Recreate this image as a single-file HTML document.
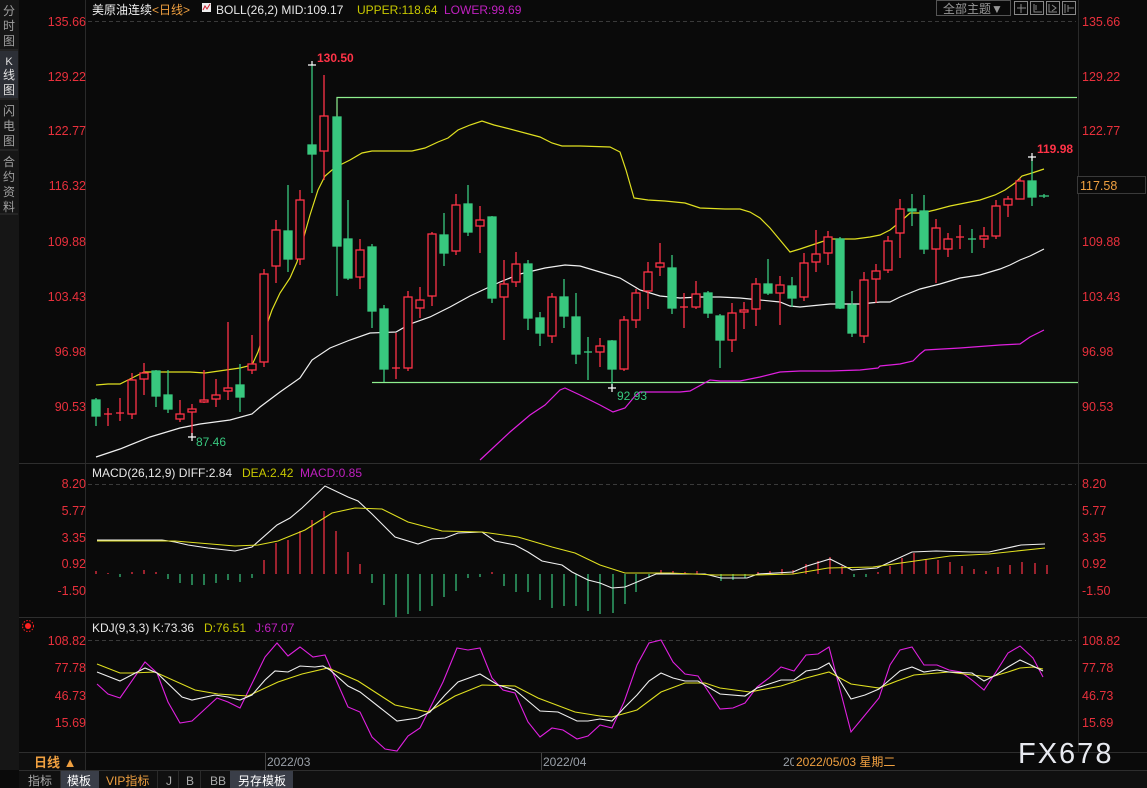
<!DOCTYPE html>
<html><head><meta charset="utf-8"><style>
html,body{margin:0;padding:0;background:#0a0a0a;width:1147px;height:788px;overflow:hidden}
svg{display:block}
text{font-family:"Liberation Sans","Noto Sans CJK SC",sans-serif}
</style></head><body>
<svg width="1147" height="788" xmlns="http://www.w3.org/2000/svg">
<rect width="1147" height="788" fill="#0a0a0a"/>
<!-- left sidebar -->
<rect x="0" y="0" width="19" height="770" fill="#161616"/>
<rect x="0" y="51" width="18" height="47" fill="#2c2f36"/>
<g fill="#a0a0a0" font-size="12" text-anchor="middle">
<text x="9" y="15">分</text><text x="9" y="30">时</text><text x="9" y="45">图</text>
<text x="9" y="65" fill="#e0e0e0" font-size="11">K</text><text x="9" y="79" fill="#e0e0e0">线</text><text x="9" y="94" fill="#e0e0e0">图</text>
<text x="9" y="115">闪</text><text x="9" y="130">电</text><text x="9" y="145">图</text>
<text x="9" y="166">合</text><text x="9" y="181">约</text><text x="9" y="196">资</text><text x="9" y="211">料</text>
</g>
<line x1="0" y1="50" x2="18" y2="50" stroke="#333"/><line x1="0" y1="99" x2="18" y2="99" stroke="#333"/><line x1="0" y1="150" x2="18" y2="150" stroke="#333"/><line x1="0" y1="214" x2="18" y2="214" stroke="#333"/>
<!-- frame lines -->
<line x1="85.5" y1="0" x2="85.5" y2="770" stroke="#2a2a2a"/>
<line x1="1078.5" y1="0" x2="1078.5" y2="752" stroke="#2a2a2a"/>
<line x1="19" y1="463.5" x2="1147" y2="463.5" stroke="#2e2e2e"/>
<line x1="19" y1="617.5" x2="1147" y2="617.5" stroke="#2e2e2e"/>
<line x1="19" y1="752.5" x2="1147" y2="752.5" stroke="#2e2e2e"/>
<line x1="19" y1="770.5" x2="1147" y2="770.5" stroke="#2e2e2e"/>
<g stroke="#3a3a3a" stroke-dasharray="4,3"><line x1="88" y1="21.5" x2="1076" y2="21.5"/><line x1="88" y1="484.5" x2="1076" y2="484.5"/><line x1="88" y1="640.5" x2="1076" y2="640.5"/></g>
<!-- axis labels -->
<g fill="#e8303c" font-size="12.5">
<g text-anchor="end">
<text x="86" y="26">135.66</text><text x="86" y="81">129.22</text><text x="86" y="135">122.77</text><text x="86" y="190">116.32</text><text x="86" y="246">109.88</text><text x="86" y="301">103.43</text><text x="86" y="356">96.98</text><text x="86" y="411">90.53</text>
<text x="86" y="488">8.20</text><text x="86" y="515">5.77</text><text x="86" y="542">3.35</text><text x="86" y="568">0.92</text><text x="86" y="595">-1.50</text>
<text x="86" y="645">108.82</text><text x="86" y="672">77.78</text><text x="86" y="700">46.73</text><text x="86" y="727">15.69</text>
</g>
<text x="1082" y="26">135.66</text><text x="1082" y="81">129.22</text><text x="1082" y="135">122.77</text><text x="1082" y="246">109.88</text><text x="1082" y="301">103.43</text><text x="1082" y="356">96.98</text><text x="1082" y="411">90.53</text>
<text x="1082" y="488">8.20</text><text x="1082" y="515">5.77</text><text x="1082" y="542">3.35</text><text x="1082" y="568">0.92</text><text x="1082" y="595">-1.50</text>
<text x="1082" y="645">108.82</text><text x="1082" y="672">77.78</text><text x="1082" y="700">46.73</text><text x="1082" y="727">15.69</text>
</g>
<rect x="1077.5" y="176.5" width="68" height="17" fill="#0a0a0a" stroke="#3a3a3a"/>
<text x="1080" y="190" fill="#f0a040" font-size="12.5">117.58</text>
<!-- header -->
<text x="92" y="14" font-size="12" fill="#f0f0f0">美原油连续<tspan fill="#f0a040">&lt;日线&gt;</tspan></text>
<rect x="202" y="3" width="9" height="9" fill="#eee"/><polyline points="203,10 205,6 207,9 210,4" fill="none" stroke="#d02030"/>
<text x="216" y="14" font-size="12" fill="#e8e8e8">BOLL(26,2) MID:109.17</text>
<text x="357" y="14" font-size="12" fill="#c8c800">UPPER:118.64</text>
<text x="444" y="14" font-size="12" fill="#c020c0">LOWER:99.69</text>
<rect x="936.5" y="0.5" width="74" height="15" fill="none" stroke="#555"/>
<text x="943" y="13" font-size="12" fill="#999">全部主题▼</text>
<g stroke="#888" fill="none"><rect x="1014.5" y="1.5" width="13" height="13"/><rect x="1030.5" y="1.5" width="13" height="13"/><rect x="1046.5" y="1.5" width="13" height="13"/><rect x="1062.5" y="1.5" width="13" height="13"/>
<path d="M1021 4v9M1017 8h9M1034 4v8h8M1036 5v5M1049 4v8h8M1052 5l4 3-4 3M1065 4v9M1068 5v7M1068 8h6"/></g>
<text x="92" y="477" font-size="12" fill="#e8e8e8">MACD(26,12,9) DIFF:2.84</text>
<text x="242" y="477" font-size="12" fill="#c8c800">DEA:2.42</text>
<text x="300" y="477" font-size="12" fill="#c020c0">MACD:0.85</text>
<circle cx="28" cy="626" r="3" fill="#ff2020"/><circle cx="28" cy="626" r="5.5" fill="none" stroke="#ff2020" stroke-dasharray="1.5,1.5"/>
<text x="92" y="632" font-size="12" fill="#e8e8e8">KDJ(9,3,3) K:73.36</text>
<text x="204" y="632" font-size="12" fill="#c8c800">D:76.51</text>
<text x="255" y="632" font-size="12" fill="#c020c0">J:67.07</text>
<!-- horizontal green lines -->
<g stroke="#8ff08f" fill="none" stroke-width="1.2"><polyline points="337,117 337,97.5 1077,97.5"/><line x1="372" y1="382.5" x2="1078" y2="382.5"/></g>
<!-- BOLL -->
<polyline fill="none" stroke="#e0e020" stroke-width="1.2" points="96,385 108,384 120,384 132,378 144,372 190,372 205,373 240,368 252,365 258,352 265,330 272,310 280,293 290,278 297,262 303,240 310,215 318,190 325,176 332,170 340,165 350,160 362,153 372,151 412,151 425,148 438,142 448,138 458,130 470,125 482,121 494,125 506,128 540,137 552,143 562,146 580,146 610,147 620,152 626,170 634,198 648,200 665,201 685,203 700,208 725,209 740,209 750,212 760,218 770,228 780,240 790,252 800,249 815,244 830,239 855,239 870,237 880,235 890,230 900,222 910,213 922,213 935,210 950,206 965,203 980,200 995,195 1005,190 1015,183 1022,176 1032,173 1044,169"/>
<polyline fill="none" stroke="#f0f0f0" stroke-width="1.2" points="96,457 120,449 150,437 180,428 200,424 230,420 252,414 260,407 280,392 300,378 312,360 330,348 350,340 370,333 396,332 410,324 430,317 450,307 470,296 485,289 500,282 520,274 545,268 565,265 580,266 600,272 620,278 640,290 660,296 680,298 700,297 720,297 740,298 760,300 780,302 790,306 800,307 830,304 860,304 880,302 890,302 900,297 920,289 940,284 960,278 980,275 1000,269 1010,265 1020,260 1030,256 1044,249"/>
<polyline fill="none" stroke="#e020e0" stroke-width="1.2" points="480,460 510,432 530,415 545,405 560,390 565,388 580,395 600,405 613,412 625,408 635,396 640,392 680,392 690,391 710,380 720,381 740,381 760,377 780,372 800,371 830,371 860,370 878,368 880,366 900,364 913,361 920,354 925,350 960,348 1000,345 1020,344 1030,337 1044,330"/>
<!-- candles -->
<g id="c" stroke-width="1.3">
<g stroke="#38c87f" fill="#38c87f">
<line x1="96" y1="398" x2="96" y2="426"/><rect x="92" y="400" width="8" height="16"/>
<line x1="156" y1="370" x2="156" y2="407"/><rect x="152" y="371" width="8" height="25"/>
<line x1="168" y1="370" x2="168" y2="413"/><rect x="164" y="395" width="8" height="14"/>
<line x1="240" y1="364" x2="240" y2="412"/><rect x="236" y="385" width="8" height="12"/>
<line x1="288" y1="185" x2="288" y2="272"/><rect x="284" y="231" width="8" height="28"/>
<line x1="312" y1="65" x2="312" y2="193"/><rect x="308" y="145" width="8" height="9"/>
<line x1="337" y1="117" x2="337" y2="296"/><rect x="333" y="117" width="8" height="129"/>
<line x1="348" y1="200" x2="348" y2="280"/><rect x="344" y="239" width="8" height="39"/>
<line x1="372" y1="244" x2="372" y2="328"/><rect x="368" y="247" width="8" height="64"/>
<line x1="384" y1="305" x2="384" y2="382"/><rect x="380" y="309" width="8" height="60"/>
<line x1="444" y1="213" x2="444" y2="266"/><rect x="440" y="235" width="8" height="18"/>
<line x1="468" y1="185" x2="468" y2="236"/><rect x="464" y="204" width="8" height="28"/>
<line x1="492" y1="216" x2="492" y2="303"/><rect x="488" y="217" width="8" height="81"/>
<line x1="528" y1="260" x2="528" y2="330"/><rect x="524" y="264" width="8" height="54"/>
<line x1="540" y1="312" x2="540" y2="346"/><rect x="536" y="318" width="8" height="15"/>
<line x1="564" y1="279" x2="564" y2="328"/><rect x="560" y="297" width="8" height="19"/>
<line x1="576" y1="293" x2="576" y2="364"/><rect x="572" y="317" width="8" height="37"/>
<line x1="588" y1="337" x2="588" y2="380"/><line x1="584" y1="352" x2="592" y2="352"/>
<line x1="612" y1="340" x2="612" y2="388"/><rect x="608" y="341" width="8" height="28"/>
<line x1="672" y1="255" x2="672" y2="314"/><rect x="668" y="268" width="8" height="40"/>
<line x1="708" y1="291" x2="708" y2="318"/><rect x="704" y="293" width="8" height="20"/>
<line x1="720" y1="314" x2="720" y2="368"/><rect x="716" y="316" width="8" height="24"/>
<line x1="768" y1="259" x2="768" y2="295"/><rect x="764" y="284" width="8" height="9"/>
<line x1="792" y1="277" x2="792" y2="307"/><rect x="788" y="286" width="8" height="12"/>
<line x1="840" y1="237" x2="840" y2="309"/><rect x="836" y="239" width="8" height="69"/>
<line x1="852" y1="291" x2="852" y2="337"/><rect x="848" y="305" width="8" height="28"/>
<line x1="912" y1="194" x2="912" y2="226"/><rect x="908" y="209" width="8" height="2"/>
<line x1="924" y1="195" x2="924" y2="254"/><rect x="920" y="211" width="8" height="38"/>
<line x1="972" y1="229" x2="972" y2="253"/><line x1="968" y1="239" x2="976" y2="239"/>
<line x1="1032" y1="157" x2="1032" y2="206"/><rect x="1028" y="181" width="8" height="16"/>
<line x1="1044" y1="194" x2="1044" y2="198"/><line x1="1039" y1="196" x2="1049" y2="196"/>
</g>
<g stroke="#ff3347" fill="#0a0a0a">
<line x1="108" y1="408" x2="108" y2="426"/><line x1="104" y1="414" x2="112" y2="414"/>
<line x1="120" y1="398" x2="120" y2="421"/><line x1="116" y1="413" x2="124" y2="413"/>
<line x1="132" y1="373" x2="132" y2="419"/><rect x="128" y="380" width="8" height="34"/>
<line x1="144" y1="363" x2="144" y2="395"/><rect x="140" y="373" width="8" height="6"/>
<line x1="180" y1="400" x2="180" y2="422"/><rect x="176" y="414" width="8" height="5"/>
<line x1="192" y1="404" x2="192" y2="437"/><rect x="188" y="409" width="8" height="3"/>
<line x1="204" y1="370" x2="204" y2="403"/><rect x="200" y="400" width="8" height="2"/>
<line x1="216" y1="379" x2="216" y2="407"/><rect x="212" y="395" width="8" height="4"/>
<line x1="228" y1="322" x2="228" y2="400"/><rect x="224" y="388" width="8" height="3"/>
<line x1="252" y1="335" x2="252" y2="374"/><rect x="248" y="364" width="8" height="6"/>
<line x1="264" y1="269" x2="264" y2="367"/><rect x="260" y="274" width="8" height="88"/>
<line x1="276" y1="220" x2="276" y2="283"/><rect x="272" y="230" width="8" height="36"/>
<line x1="300" y1="190" x2="300" y2="265"/><rect x="296" y="200" width="8" height="59"/>
<line x1="324" y1="75" x2="324" y2="180"/><rect x="320" y="116" width="8" height="35"/>
<line x1="360" y1="239" x2="360" y2="289"/><rect x="356" y="250" width="8" height="27"/>
<line x1="396" y1="333" x2="396" y2="379"/><line x1="392" y1="368" x2="400" y2="368"/>
<line x1="408" y1="291" x2="408" y2="371"/><rect x="404" y="297" width="8" height="71"/>
<line x1="420" y1="287" x2="420" y2="318"/><rect x="416" y="300" width="8" height="8"/>
<line x1="432" y1="232" x2="432" y2="306"/><rect x="428" y="234" width="8" height="62"/>
<line x1="456" y1="194" x2="456" y2="255"/><rect x="452" y="205" width="8" height="46"/>
<line x1="480" y1="206" x2="480" y2="253"/><rect x="476" y="220" width="8" height="6"/>
<line x1="504" y1="260" x2="504" y2="340"/><rect x="500" y="284" width="8" height="13"/>
<line x1="516" y1="252" x2="516" y2="287"/><rect x="512" y="264" width="8" height="18"/>
<line x1="552" y1="293" x2="552" y2="343"/><rect x="548" y="297" width="8" height="39"/>
<line x1="600" y1="338" x2="600" y2="367"/><rect x="596" y="346" width="8" height="6"/>
<line x1="624" y1="316" x2="624" y2="371"/><rect x="620" y="320" width="8" height="49"/>
<line x1="636" y1="289" x2="636" y2="328"/><rect x="632" y="293" width="8" height="27"/>
<line x1="648" y1="262" x2="648" y2="309"/><rect x="644" y="272" width="8" height="19"/>
<line x1="660" y1="243" x2="660" y2="276"/><rect x="656" y="263" width="8" height="4"/>
<line x1="684" y1="293" x2="684" y2="328"/><line x1="680" y1="307" x2="688" y2="307"/>
<line x1="696" y1="281" x2="696" y2="309"/><rect x="692" y="294" width="8" height="13"/>
<line x1="732" y1="303" x2="732" y2="352"/><rect x="728" y="313" width="8" height="27"/>
<line x1="744" y1="302" x2="744" y2="329"/><rect x="740" y="310" width="8" height="2"/>
<line x1="756" y1="278" x2="756" y2="326"/><rect x="752" y="284" width="8" height="25"/>
<line x1="780" y1="276" x2="780" y2="325"/><rect x="776" y="285" width="8" height="8"/>
<line x1="804" y1="253" x2="804" y2="301"/><rect x="800" y="263" width="8" height="34"/>
<line x1="816" y1="230" x2="816" y2="272"/><rect x="812" y="254" width="8" height="8"/>
<line x1="828" y1="231" x2="828" y2="265"/><rect x="824" y="237" width="8" height="16"/>
<line x1="864" y1="272" x2="864" y2="343"/><rect x="860" y="280" width="8" height="56"/>
<line x1="876" y1="264" x2="876" y2="303"/><rect x="872" y="271" width="8" height="8"/>
<line x1="888" y1="236" x2="888" y2="273"/><rect x="884" y="241" width="8" height="29"/>
<line x1="900" y1="199" x2="900" y2="258"/><rect x="896" y="209" width="8" height="24"/>
<line x1="936" y1="219" x2="936" y2="283"/><rect x="932" y="228" width="8" height="21"/>
<line x1="948" y1="233" x2="948" y2="257"/><rect x="944" y="239" width="8" height="10"/>
<line x1="960" y1="225" x2="960" y2="249"/><line x1="956" y1="237" x2="964" y2="237"/>
<line x1="984" y1="227" x2="984" y2="248"/><rect x="980" y="236" width="8" height="3"/>
<line x1="996" y1="200" x2="996" y2="239"/><rect x="992" y="206" width="8" height="30"/>
<line x1="1008" y1="196" x2="1008" y2="217"/><rect x="1004" y="199" width="8" height="6"/>
<line x1="1020" y1="178" x2="1020" y2="199"/><rect x="1016" y="181" width="8" height="18"/>
</g></g>
<!-- markers -->
<g stroke="#fff" stroke-width="1.2"><path d="M308 65h8M192 437h0M188 437h8M608 388h8M1028 157h8M1032 153v8M312 61v4M192 433v8M612 384v8"/></g>
<g font-size="12" font-weight="bold"><text x="317" y="62" fill="#ff3347">130.50</text><text x="1037" y="153" fill="#ff3347">119.98</text></g>
<g font-size="12"><text x="196" y="446" fill="#38c87f">87.46</text><text x="617" y="400" fill="#38c87f">92.93</text></g>
<!-- MACD histogram -->
<g stroke-width="1.2">
<g stroke="#ff3347"><path d="M96 574v-3M108 574v-1M132 574v-2M144 574v-4M156 574v-2M264 574v-14M276 574v-31M288 574v-34M300 574v-43M312 574v-54M324 574v-63M336 574v-43M348 574v-22M360 574v-10M492 574v-2M661 574v-4M673 574v-3M685 574v-2M697 574v-3M758 574v-2M770 574v-3M782 574v-5M793 574v-4M806 574v-10M818 574v-13M830 574v-17M842 574v-8M878 574v-2M890 574v-8M902 574v-16M914 574v-21M926 574v-15M938 574v-14M950 574v-12M962 574v-8M974 574v-5M986 574v-3M998 574v-7M1010 574v-9M1022 574v-12M1035 574v-11M1047 574v-9"/></g>
<g stroke="#38c87f"><path d="M120 574v3M168 574v5M180 574v9M192 574v11M204 574v11M216 574v9M228 574v6M240 574v8M252 574v4M372 574v9M384 574v31M396 574v43M408 574v40M420 574v37M432 574v32M444 574v23M456 574v17M468 574v4M480 574v3M504 574v12M516 574v18M528 574v18M540 574v26M552 574v34M564 574v32M576 574v32M588 574v37M600 574v40M613 574v39M625 574v30M636 574v18M649 574v4M721 574v7M733 574v6M745 574v4M854 574v3M866 574v3"/></g>
</g>
<polyline fill="none" stroke="#f0f0f0" stroke-width="1.1" points="97,540 162,540 175,542 188,545 208,548 235,551 252,547 277,525 290,518 302,508 325,486 348,497 358,501 372,514 395,537 418,544 432,539 445,538 458,533 482,532 495,541 515,545 528,552 542,561 562,565 572,572 588,580 600,583 612,588 625,587 637,582 656,574 705,574 721,578 747,578 758,574 793,572 807,566 830,559 852,570 877,568 912,552 936,551 972,552 989,552 1021,545 1045,544"/>
<polyline fill="none" stroke="#e0e020" stroke-width="1.1" points="97,541 175,541 235,546 258,545 278,541 305,530 332,513 355,508 382,509 408,522 442,531 482,532 518,537 552,547 575,553 600,565 625,573 670,573 716,575 754,575 793,574 828,568 873,567 908,562 950,556 989,554 1045,548"/>
<!-- KDJ -->
<polyline fill="none" stroke="#e020e0" stroke-width="1.1" points="97,684 108,694 120,698 145,662 157,673 168,702 180,723 192,721 217,698 228,702 240,708 265,657 277,643 288,656 300,647 313,657 325,655 348,707 360,712 372,737 385,749 397,751 408,736 420,728 443,682 457,648 468,650 480,648 492,678 503,690 515,693 528,722 540,737 552,728 563,730 577,739 588,736 600,725 612,728 624,702 637,665 649,643 661,640 673,662 685,674 698,676 720,709 733,708 745,703 757,687 769,678 781,667 794,671 806,655 818,654 829,647 851,732 865,715 879,698 890,665 900,650 912,647 924,665 937,665 949,670 961,672 972,680 984,690 996,672 1008,653 1020,646 1033,658 1043,677"/>
<polyline fill="none" stroke="#e0e020" stroke-width="1.1" points="97,664 120,673 132,673 155,672 195,690 218,694 248,696 278,682 302,674 328,668 358,681 395,705 428,712 455,696 482,685 515,686 538,698 575,712 600,716 612,717 637,710 661,692 685,683 705,683 720,688 750,692 781,686 806,678 829,672 851,684 879,688 897,681 914,675 949,672 972,675 991,677 1008,672 1020,668 1033,667 1043,669"/>
<polyline fill="none" stroke="#f0f0f0" stroke-width="1.1" points="97,672 120,681 145,668 157,673 182,697 192,700 215,695 228,697 240,700 252,695 265,680 275,671 288,672 300,666 315,667 323,666 330,670 348,686 360,692 397,721 418,718 430,712 445,695 458,682 480,674 498,685 515,690 540,711 558,712 577,721 588,721 600,719 612,721 624,708 637,695 649,681 661,673 673,678 685,681 698,681 720,694 745,696 757,688 781,680 794,680 806,671 818,669 829,663 851,699 865,695 879,689 900,671 912,667 924,672 937,670 949,672 972,673 984,681 996,675 1008,667 1020,660 1033,666 1043,671"/>
<!-- date bar -->
<rect x="19" y="753" width="66" height="17" fill="#0e0e0e"/>
<text x="34" y="767" font-size="13" font-weight="bold" fill="#f0a040">日线 ▲</text>
<line x1="265.5" y1="753" x2="265.5" y2="770" stroke="#444"/><line x1="541.5" y1="753" x2="541.5" y2="770" stroke="#444"/>
<text x="267" y="766" font-size="12" fill="#9aa0a8">2022/03</text>
<text x="543" y="766" font-size="12" fill="#9aa0a8">2022/04</text>
<text x="783" y="766" font-size="12" fill="#9aa0a8">20</text>
<rect x="794" y="753" width="110" height="17" fill="#0a0a0a"/>
<text x="796" y="766" font-size="12" fill="#f0a040">2022/05/03 星期二</text>
<text x="1018" y="763" font-size="29" fill="#e8eaf0" letter-spacing="2">FX678</text>
<!-- tabs -->
<rect x="19" y="771" width="1128" height="17" fill="#101010"/>
<rect x="61" y="771" width="38" height="17" fill="#3a3e48"/>
<rect x="230" y="771" width="63" height="17" fill="#3a3e48"/>
<g font-size="12"><text x="28" y="785" fill="#aaa">指标</text><text x="67" y="785" fill="#fff">模板</text><text x="106" y="785" fill="#f0a040" font-family="Liberation Serif,Noto Serif CJK SC,serif">VIP指标</text><text x="166" y="785" fill="#aaa">J</text><text x="186" y="785" fill="#aaa">B</text><text x="210" y="785" fill="#aaa">BB</text><text x="238" y="785" fill="#fff">另存模板</text></g>
<g stroke="#2a2a2a"><line x1="60.5" y1="771" x2="60.5" y2="788"/><line x1="157.5" y1="771" x2="157.5" y2="788"/><line x1="178.5" y1="771" x2="178.5" y2="788"/><line x1="200.5" y1="771" x2="200.5" y2="788"/></g>
</svg>
</body></html>
